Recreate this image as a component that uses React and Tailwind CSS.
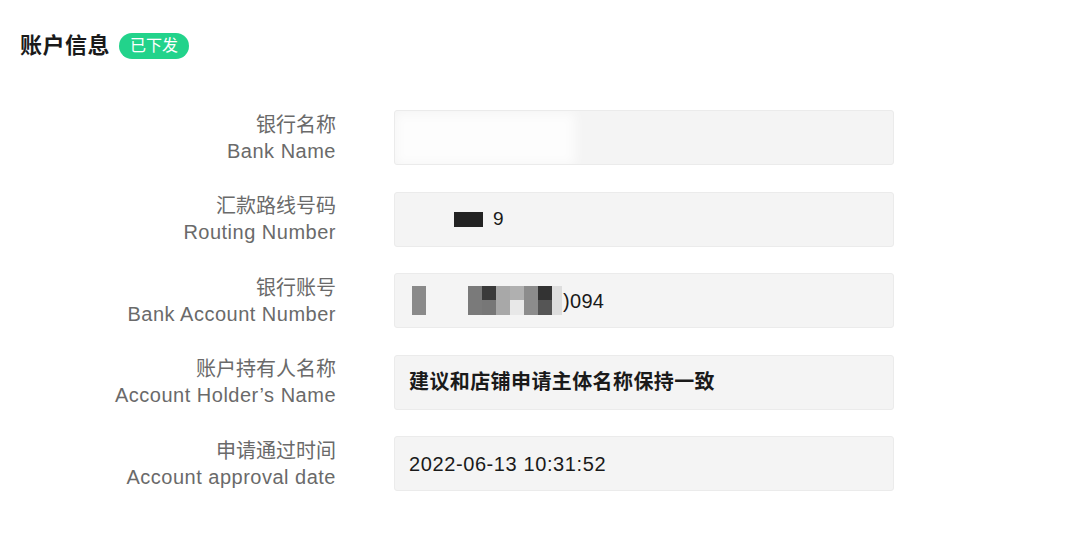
import React from 'react';

const FONT = { fontFamily: '"Liberation Sans", "Noto Sans CJK SC", sans-serif' };

const rows = [
  { zh: '银行名称', en: 'Bank Name', kind: 'bank' },
  { zh: '汇款路线号码', en: 'Routing Number', kind: 'routing' },
  { zh: '银行账号', en: 'Bank Account Number', kind: 'account' },
  { zh: '账户持有人名称', en: 'Account Holder’s Name', value: '建议和店铺申请主体名称保持一致', cjk: true },
  { zh: '申请通过时间', en: 'Account approval date', value: '2022-06-13 10:31:52' },
];

function Value({ row }) {
  if (row.kind === 'bank') {
    return <div className="absolute left-0 top-[2px] h-[52px] w-[180px] bg-white/80 blur-[6px]" />;
  }
  if (row.kind === 'routing') {
    return (
      <div className="flex items-center pl-[59px]">
        <span className="block h-[15px] w-[29px] bg-[#222] blur-[0.5px]" />
        <span className="ml-[10px] text-[19px] text-[#1a1a1a]">9</span>
      </div>
    );
  }
  if (row.kind === 'account') {
    return (
      <div className="flex items-center pl-[17px]">
        <span className="block h-[29px] w-[14px] bg-[#8a8a8a]" />
        <span className="ml-[42px] flex h-[29px]">
          <span className="block w-[14px] bg-[#7a7a7a]" />
          <span className="flex w-[14px] flex-col"><span className="h-[14px] bg-[#3a3a3a]" /><span className="flex-1 bg-[#777]" /></span>
          <span className="block w-[14px] bg-[#a8a8a8]" />
          <span className="flex w-[14px] flex-col"><span className="h-[14px] bg-[#b0b0b0]" /><span className="flex-1 bg-[#e8e8e8]" /></span>
          <span className="block w-[14px] bg-[#8c8c8c]" />
          <span className="flex w-[14px] flex-col"><span className="h-[14px] bg-[#333]" /><span className="flex-1 bg-[#555]" /></span>
          <span className="block w-[10px] bg-[#ddd]" />
        </span>
        <span className="ml-[1px] text-[20px] tracking-[0.3px] text-[#1a1a1a]">)094</span>
      </div>
    );
  }
  return (
    <span className={row.cjk ? 'pl-[14px] text-[20px] font-semibold tracking-[0.4px] text-[#1a1a1a]' : 'pl-[14px] text-[20px] tracking-[0.6px] text-[#1a1a1a]'}>
      {row.value}
    </span>
  );
}

export default function App() {
  return (
    <div className="min-h-screen bg-white" style={FONT}>
      <div className="flex items-center gap-[9px] pl-[20px] pt-[31px]">
        <h1 className="text-[22px] leading-[30px] font-bold tracking-[0.5px] text-[#1a1a1a]">账户信息</h1>
        <span className="flex h-[26px] w-[70px] items-center justify-center rounded-full bg-[#22d38b] text-[16px] text-white">已下发</span>
      </div>
      <div className="mt-[49px] flex flex-col gap-[26.5px]">
        {rows.map((row) => (
          <div key={row.en} className="flex items-center">
            <div className="w-[336px] text-right text-[20px] leading-[26px] text-[#6a6a6a]">
              <div>{row.zh}</div>
              <div className="tracking-[0.5px]">{row.en}</div>
            </div>
            <div className="relative ml-[58px] flex h-[55px] w-[500px] items-center overflow-hidden rounded-[3px] border border-[#ebebeb] bg-[#f4f4f4]">
              <Value row={row} />
            </div>
          </div>
        ))}
      </div>
    </div>
  );
}
